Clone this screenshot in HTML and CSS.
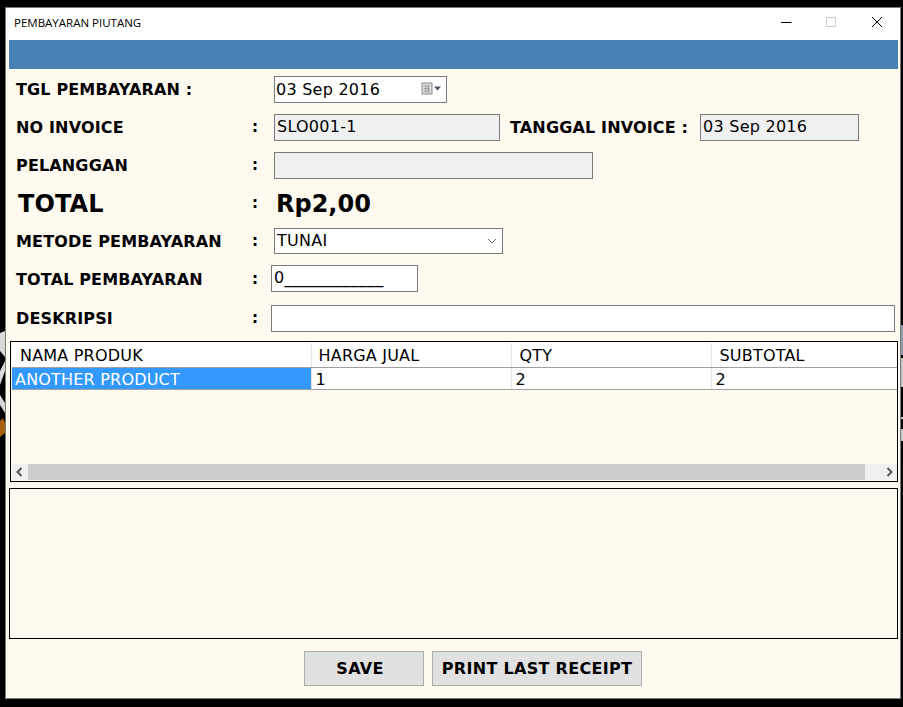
FILE: index.html
```html
<!DOCTYPE html>
<html lang="en">
<head>
  <meta charset="UTF-8">
  <title>Pembayaran Piutang</title>
  <link rel="stylesheet" href="styles.css">
</head>
<body>

<!-- bits of the desktop wallpaper showing beside the window -->
<svg class="wall wall-left" width="5" height="125" viewBox="0 0 5 125">
  <path d="M0 8 L5 6 L5 32 L0 26Z M0 46 L5 36 L5 46 L0 60Z M0 70 L5 78 L5 88 L0 80Z" fill="#d8d8d8"/>
  <path d="M0 96 L3 93 L5 98 L5 108 L0 112Z" fill="#a8610f"/>
</svg>
<svg class="wall wall-right" width="2" height="125" viewBox="0 0 2 125">
  <path d="M0 0 H2 V30 H0Z" fill="#8b99ab"/>
  <path d="M0 33 H2 V62 H0Z M0 92 H2 V94 H0Z M0 104 H2 V116 H0Z" fill="#c4c6c8"/>
</svg>

<div class="window">
  <header class="titlebar">
    <span class="title">PEMBAYARAN PIUTANG</span>
    <div class="controls">
      <svg width="12" height="12" viewBox="0 0 12 12"><path d="M0 6.5H10.5" stroke="#000" fill="none"/></svg>
      <svg width="12" height="12" viewBox="0 0 12 12"><path d="M0.5 1.5H9.5V10.5H0.5Z" stroke="#ccc" fill="none"/></svg>
      <svg width="12" height="12" viewBox="0 0 12 12"><path d="M1 1L11 11M11 1L1 11" stroke="#000" fill="none"/></svg>
    </div>
  </header>
  <div class="bluebar"></div>

  <main class="content">
    <div class="form">
      <div class="row">
        <div class="label label-wide">TGL PEMBAYARAN :</div>
        <div class="field field-date">
          <span>03 Sep 2016</span>
          <svg width="22" height="14" viewBox="0 0 22 14">
            <rect x="1" y="1" width="10" height="11" fill="#dcdcdc" stroke="#8a8a8a"/>
            <path d="M3 4H9M3 6.5H9M3 9H9M5 3V11M7.5 3V11" stroke="#a0a0a0" fill="none"/>
            <path d="M13 4.5H20L16.5 8.5Z" fill="#4a5568"/>
          </svg>
        </div>
      </div>
      <div class="row">
        <div class="label">NO INVOICE</div>
        <div class="colon">:</div>
        <div class="field field-invoice readonly">SLO001-1</div>
        <div class="label label-inline">TANGGAL INVOICE :</div>
        <div class="field field-invdate readonly">03 Sep 2016</div>
      </div>
      <div class="row">
        <div class="label">PELANGGAN</div>
        <div class="colon">:</div>
        <div class="field field-customer readonly"></div>
      </div>
      <div class="row">
        <div class="label label-total">TOTAL</div>
        <div class="colon">:</div>
        <div class="total-value">Rp2,00</div>
      </div>
      <div class="row">
        <div class="label">METODE PEMBAYARAN</div>
        <div class="colon">:</div>
        <div class="field field-method">
          <span>TUNAI</span>
          <svg width="10" height="6" viewBox="0 0 10 6"><path d="M1 1L5 5L9 1" stroke="#666" fill="none"/></svg>
        </div>
      </div>
      <div class="row">
        <div class="label">TOTAL PEMBAYARAN</div>
        <div class="colon">:</div>
        <div class="field field-amount">0____________</div>
      </div>
      <div class="row row-last">
        <div class="label">DESKRIPSI</div>
        <div class="colon">:</div>
        <div class="field field-desc"></div>
      </div>
    </div>

    <div class="grid-box">
      <table class="grid">
        <thead>
          <tr><th>NAMA PRODUK</th><th>HARGA JUAL</th><th>QTY</th><th>SUBTOTAL</th></tr>
        </thead>
        <tbody>
          <tr><td class="selected">ANOTHER PRODUCT</td><td>1</td><td>2</td><td>2</td></tr>
        </tbody>
      </table>
      <div class="scrollbar">
        <svg width="16" height="16" viewBox="0 0 16 16"><path d="M9.5 4L5.5 8L9.5 12" stroke="#555" stroke-width="2" fill="none"/></svg>
        <div class="thumb"></div>
        <svg width="16" height="16" viewBox="0 0 16 16"><path d="M6.5 4L10.5 8L6.5 12" stroke="#555" stroke-width="2" fill="none"/></svg>
      </div>
    </div>

    <div class="notes"></div>

    <div class="buttons">
      <button class="btn btn-save">SAVE</button>
      <button class="btn btn-print">PRINT LAST RECEIPT</button>
    </div>
  </main>
</div>

</body>
</html>
```

FILE: styles.css
```css
* { box-sizing: border-box; }
html, body { height: 100%; }
body {
  margin: 0;
  padding: 7px 2px 8px 5px;
  background-color: #000;
  color: #000;
  font-family: 'DejaVu Sans', sans-serif;
  overflow: hidden;
}
.wall { position: absolute; top: 325px; }
.wall-left { left: 0; }
.wall-right { right: 0; }

.window {
  height: 100%;
  display: flex;
  flex-direction: column;
  background-color: #fffaf0;
  border: 1px solid #7a7a7a;
}
.titlebar {
  height: 32px;
  flex: none;
  display: flex;
  justify-content: space-between;
  align-items: center;
  background-color: #fff;
  padding: 0 17px 4px 8px;
}
.title { font-family: 'Open Sans', sans-serif; font-size: 11.5px; }
.controls { display: flex; gap: 33px; }
.bluebar {
  height: 29px;
  flex: none;
  margin: 0 2px 0 3px;
  background-color: #4682b4;
}
.content {
  flex: 1;
  display: flex;
  flex-direction: column;
  padding: 1px 2px 0 3px;
}

.form { padding-left: 7px; }
.row {
  height: 38px;
  display: flex;
  align-items: center;
}
.row-last { height: 40px; }
.label {
  width: 236px;
  flex: none;
  font-size: 16px;
  font-weight: 700;
  letter-spacing: 0.15px;
}
.label-wide { width: 258px; }
.label-inline { width: auto; margin: 0 12px 0 10px; }
.label-total { font-size: 24px; padding: 2px 0 0 2px; letter-spacing: 0.1px; }
.colon { width: 22px; flex: none; font-size: 15px; font-weight: 700; }

.field {
  height: 27px;
  display: flex;
  align-items: center;
  justify-content: space-between;
  padding: 0 1px;
  background-color: #fff;
  border: 1px solid #7a7a7a;
  font-size: 16px;
  letter-spacing: 0.25px;
  white-space: nowrap;
}
.readonly { background-color: #f0f0f0; padding: 0 2px 2px; }
.field-date { width: 173px; }
.field-date svg { margin-right: 2px; }
.field-invoice { width: 226px; }
.field-invdate { width: 159px; }
.field-customer { width: 319px; }
.field-method { width: 229px; height: 26px; padding-bottom: 2px; padding-left: 2px; }
.field-method svg { margin: 2px 4px 0 0; }
.field-amount { width: 147px; margin: 0 0 2px -3px; padding-left: 2px; padding-bottom: 2px; }
.field-desc { width: 624px; margin-left: -3px; }
.total-value { font-size: 24px; font-weight: 700; padding: 2px 0 0 2px; }

.grid-box {
  height: 141px;
  flex: none;
  margin: 3px 0 0 1px;
  display: flex;
  flex-direction: column;
  justify-content: space-between;
  border: 1px solid #000;
  padding: 1px 0 1px 1px;
}
.grid {
  width: 100%;
  table-layout: fixed;
  border-collapse: collapse;
  font-size: 16px;
  letter-spacing: 0.2px;
}
.grid th, .grid td {
  padding: 2px 0 0 4px;
  font-weight: 400;
  text-align: left;
  border-right: 1px solid #e3e3e3;
  border-bottom: 1px solid #a0a0a0;
  white-space: nowrap;
  background-color: #fff;
}
.grid th { height: 24px; padding: 2px 0 0 7px; }
.grid td { height: 22px; }
.grid th:first-child, .grid th:nth-child(n+3) { padding-left: 8px; }
.grid th:last-child, .grid td:last-child { border-right: none; }
.grid td.selected { padding-left: 3px; background-color: #3399ff; color: #fff; }
.grid th:first-child, .grid td:first-child { width: 299px; }
.grid th:nth-child(2), .grid td:nth-child(2),
.grid th:nth-child(3), .grid td:nth-child(3) { width: 200px; }

.scrollbar {
  height: 16px;
  display: flex;
  justify-content: space-between;
  background-color: #f0f0f0;
}
.thumb { width: 837px; margin-right: 16px; background-color: #cdcdcd; }

.notes {
  height: 151px;
  flex: none;
  margin-top: 6px;
  border: 1px solid #000;
}
.buttons {
  display: flex;
  gap: 8px;
  margin-top: 12px;
  padding-left: 295px;
}
.btn {
  height: 35px;
  background-color: #e1e1e1;
  border: 1px solid #adadad;
  color: #000;
  font-family: 'DejaVu Sans', sans-serif;
  font-size: 16px;
  font-weight: 700;
  letter-spacing: 0.3px;
  padding: 0;
}
.btn-save { width: 120px; padding-right: 8px; }
.btn-print { width: 210px; }
```
